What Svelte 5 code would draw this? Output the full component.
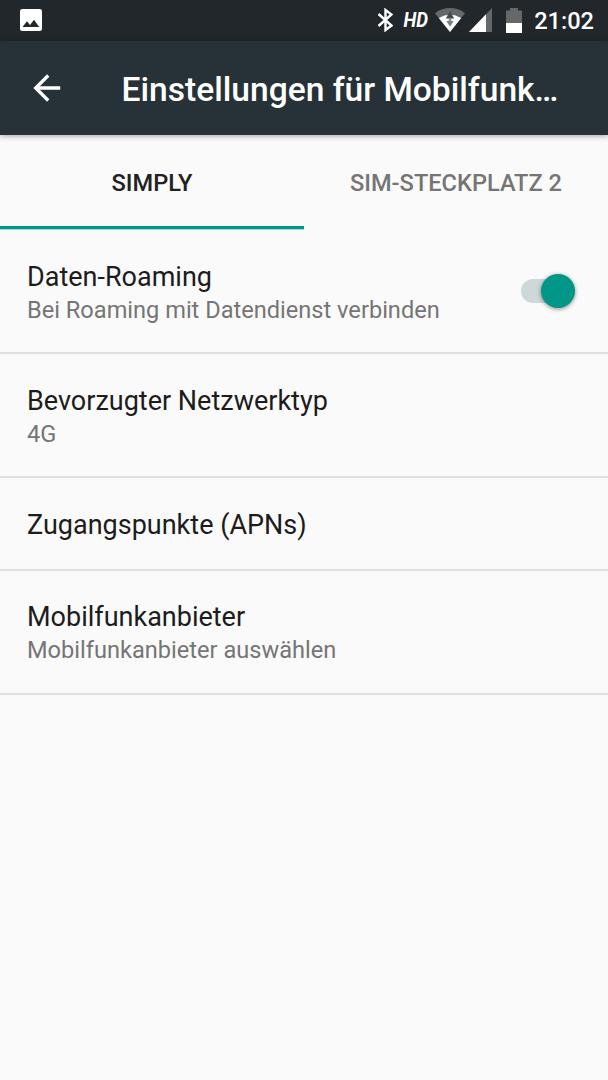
<script lang="ts">
    interface Setting {
        title: string;
        summary?: string;
        toggle?: boolean;
    }

    const tabs = ['SIMPLY', 'SIM-STECKPLATZ 2'];

    const settings: Setting[] = [
        { title: 'Daten-Roaming', summary: 'Bei Roaming mit Datendienst verbinden', toggle: true },
        { title: 'Bevorzugter Netzwerktyp', summary: '4G' },
        { title: 'Zugangspunkte (APNs)' },
        { title: 'Mobilfunkanbieter', summary: 'Mobilfunkanbieter auswählen' }
    ];

    let activeTab = $state(0);
    let roaming = $state(true);
</script>

<div class="screen">
    <div class="status-bar">
        <svg class="picture" width="22" height="22" viewBox="0 0 22 22">
            <rect width="22" height="22" rx="2.3" fill="#fff" />
            <path d="M2.5 18l4.500-5.700 3 3.600 4-5.200 5.200 7.300z" fill="#21272b" />
        </svg>
        <div class="indicators">
            <svg class="bluetooth" width="16" height="24" viewBox="0 0 16 24" fill="none" stroke="#fff" stroke-width="2.4">
                <path d="M1.500 6l13 11.500-6 4.500V2l6 4.500L1.500 18" />
            </svg>
            <span class="hd">HD</span>
            <svg class="wifi" width="30" height="24" viewBox="0 0 30 24">
                <path d="M0 5.200C8.500-1.600 21.500-1.600 30 5.200L15 24z" fill="#64686b" />
                <path d="M3.800 10Q15 3 26.200 10L15 24z" fill="#fff" />
                <path d="M15 3.300l4.200 7.200h-8.400z" fill="#43494c" />
                <path d="M13.700 10h2.600v4h-2.600z" fill="#8b8e90" />
                <path d="M11.300 13h7.400L15 18.700z" fill="#7d8183" />
            </svg>
            <svg class="signal" width="23" height="24" viewBox="0 0 23 24">
                <path d="M23 0v24H0z" fill="#64686b" />
                <path d="M17 6.300V24H0z" fill="#fff" />
            </svg>
            <svg class="battery" width="16" height="25" viewBox="0 0 16 25">
                <path d="M4 0h8v2.500h4V15H0V2.500h4z" fill="#64686b" />
                <path d="M0 15h16v10H0z" fill="#fff" />
            </svg>
            <span class="clock">21:02</span>
        </div>
    </div>

    <header class="app-bar">
        <button class="back" aria-label="Zurück">
            <svg width="28" height="28" viewBox="0 0 28 28" fill="none" stroke="#fff" stroke-width="3.3">
                <path d="M27.200 14H3M15.200 1.500L2.700 14l12.500 12.500" />
            </svg>
        </button>
        <h1>Einstellungen für Mobilfunk…</h1>
    </header>

    <div class="tabs" role="tablist">
        {#each tabs as tab, i}
            <button
                class="tab"
                class:active={activeTab === i}
                role="tab"
                aria-selected={activeTab === i}
                onclick={() => (activeTab = i)}
            >
                {tab}
            </button>
        {/each}
    </div>

    <div class="list">
        {#each settings as setting}
            <div class="row" class:single={!setting.summary}>
                <div class="text">
                    <div class="title">{setting.title}</div>
                    {#if setting.summary}
                        <div class="summary">{setting.summary}</div>
                    {/if}
                </div>
                {#if setting.toggle}
                    <button
                        class="switch"
                        class:on={roaming}
                        role="switch"
                        aria-checked={roaming}
                        aria-label={setting.title}
                        onclick={() => (roaming = !roaming)}
                    >
                        <span class="thumb"></span>
                    </button>
                {/if}
            </div>
        {/each}
    </div>
</div>

<style>
    :global(body) {
        margin: 0;
        background: #fafafa;
    }

    .screen {
        width: 608px;
        height: 1080px;
        overflow: hidden;
        background: #fafafa;
        font-family: Roboto, 'Liberation Sans', sans-serif;
    }

    button {
        padding: 0;
        border: none;
        background: none;
        font-family: inherit;
    }

    svg {
        display: block;
        flex: none;
    }

    .status-bar {
        display: flex;
        justify-content: space-between;
        align-items: center;
        box-sizing: border-box;
        height: 41px;
        padding: 0 14px 1px 19.5px;
        background: #21272b;
        color: #fff;
    }

    .indicators {
        display: flex;
        align-items: center;
    }

    .hd {
        width: 26px;
        margin: 0 7px 0 9px;
        font-size: 21px;
        font-style: italic;
        font-weight: 700;
        line-height: 24px;
        white-space: nowrap;
        transform: scaleX(0.89);
    }

    .signal {
        margin-left: 4px;
    }

    .battery {
        margin: 0 12px 0 14px;
    }

    .clock {
        padding-top: 2px;
        font-size: 23.6px;
        font-weight: 500;
        line-height: 28px;
    }

    .app-bar {
        position: relative;
        display: flex;
        align-items: center;
        height: 94px;
        background: #273238;
        box-shadow: 0 1px 6px rgba(0, 0, 0, 0.35);
    }

    .back {
        margin: 0 60.5px 0 33px;
    }

    h1 {
        margin: 0;
        padding-top: 3px;
        color: #fff;
        font-size: 33.6px;
        font-weight: 500;
        line-height: 40px;
        white-space: nowrap;
    }

    .tabs {
        display: flex;
        height: 94px;
        margin-bottom: 1px;
    }

    .tab {
        flex: 1;
        box-sizing: border-box;
        padding-top: 4px;
        border-bottom: 3px solid transparent;
        color: #757575;
        font-size: 23.6px;
        font-weight: 500;
    }

    .tab.active {
        border-bottom-color: #009688;
        box-shadow: 0 1px #a9dad5;
        color: #212121;
    }

    .row {
        display: flex;
        justify-content: space-between;
        align-items: center;
        box-sizing: border-box;
        height: 124.2px;
        padding: 0 33px 0 27px;
        border-bottom: 2px solid #dfdfdf;
    }

    .row.single {
        height: 92.3px;
    }

    .text {
        padding-top: 2px;
    }

    .title {
        color: #1c1c1c;
        font-size: 27px;
        line-height: 32px;
    }

    .summary {
        margin-top: 3px;
        color: #757575;
        font-size: 23.6px;
        line-height: 28px;
    }

    .switch {
        display: flex;
        align-items: center;
        width: 54px;
        height: 24px;
        border-radius: 12px;
        background: #cdd9d8;
    }

    .switch.on {
        justify-content: flex-end;
    }

    .thumb {
        width: 34px;
        height: 34px;
        border-radius: 50%;
        background: #f1f1f1;
        box-shadow: 0 1px 4px rgba(0, 0, 0, 0.45);
    }

    .on .thumb {
        background: #009688;
    }
</style>
